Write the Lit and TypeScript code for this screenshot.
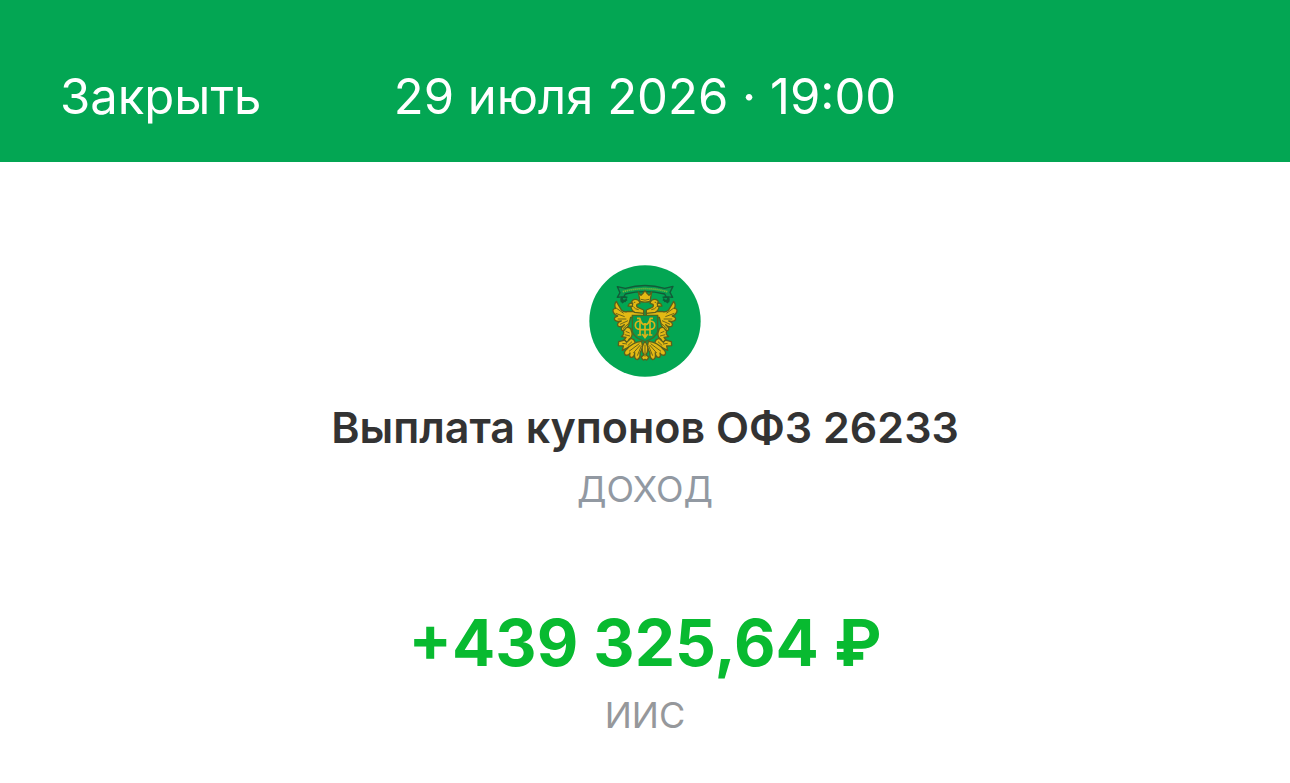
import { LitElement, css, html, svg } from "lit";
import { customElement, property } from "lit/decorators.js";

@customElement("issuer-emblem")
export class IssuerEmblem extends LitElement {
  // One side of the eagle, mirrored around x = 180 for the other side
  renderHalf() {
    return svg`
      <path class="gold" d="M176 153 L128 152 Q118 156 109 148 L94 122 Q86 132 92 143 Q81 144 85 155 Q88 163 98 166 Q84 170 90 179 Q97 185 109 181 Q92 188 100 197 Q109 201 118 192 Q103 204 112 210 Q124 208 131 193 L137 170 L176 165 Z"/>
      <path class="line" d="M92 141 L116 158 M92 158 L119 168 M98 175 L124 175 M105 191 L129 180 M114 204 L131 188"/>
      <path class="gold" d="M176 158 L149 155 Q136 148 138 132 Q139 116 151 116 Q162 116 165 128 L156 131 Q152 138 162 142 L176 148 Z"/>
      <path class="gold" d="M143 127 L133 129 L129 136 L142 137 Z"/>
      <path class="line" d="M147 125 h4 M145 138 Q150 146 161 147"/>
      <path class="gold" d="M119 207 Q126 195 137 204 L141 216 Q143 230 132 236 L129 247 L117 238 L123 230 L109 228 Q119 220 115 211 Z"/>
      <path class="line" d="M122 212 L134 217 M119 222 L135 226"/>
      <path class="gold" d="M101 243 L119 238 L125 245 L138 233 Q152 237 150 250 L130 260 L112 269 L115 256 L100 255 Z"/>
      <path class="line" d="M112 248 L126 250 M128 255 L141 243"/>
      <path class="gold" d="M170 242 Q143 244 125 266 Q114 275 121 283 Q130 286 135 277 Q131 292 142 290 Q150 286 149 276 Q146 295 157 297 Q167 292 165 277 L173 260 Z"/>
      <path class="line" d="M132 272 L163 249 M145 277 L166 253 M157 285 L169 256"/>
    `;
  }

  renderBranch() {
    return svg`
      <path class="branch" d="M127 111 Q104 103 110 124 M115 109 Q103 118 123 122 M126 116 L110 126"/>
    `;
  }

  render() {
    return html`
      <svg viewBox="12 13 336 336" role="img" aria-label="Министерство финансов">
        <circle class="disc" cx="180" cy="181" r="167" />
        ${this.renderBranch()}
        <g transform="translate(360 0) scale(-1 1)">${this.renderBranch()}</g>
        ${this.renderHalf()}
        <g transform="translate(360 0) scale(-1 1)">${this.renderHalf()}</g>
        <path class="ribbon" d="M97 78 L121 83 Q180 66 239 83 L264 77 L255 95 L263 110 L243 108 L239 100 Q180 86 121 100 L117 108 L97 110 L105 96 Z" />
        <path class="motto" d="M113 93 Q180 75 247 93" />
        <path class="gold" d="M160 94 L168 104 L174 98 L180 90 L186 98 L192 104 L200 94 L195 122 Q180 127 165 122 Z" />
        <path class="line" d="M168 116 Q180 121 192 116" />
        <path class="shield" d="M142 164 H218 V213 Q213 232 180 243 Q147 232 142 213 Z" />
        <path class="mono" d="M165 173 V223 M195 173 V223 M180 187 V231 M165 175 Q169 192 180 192 Q191 192 195 175 M164 181 Q151 182 151 194 Q151 206 164 206 M196 181 Q209 182 209 194 Q209 206 196 206 M165 207 H195 M158 223 H169 M191 223 H202 M156 173 H166 M194 173 H204 M172 220 L180 231 L188 220" />
        <path class="gold" d="M180 243 Q168 256 173 275 L177 282 L169 289 Q173 302 180 296 Q187 302 191 289 L183 282 L187 275 Q192 256 180 243 Z" />
        <path class="line" d="M180 252 V288" />
      </svg>
    `;
  }

  static styles = css`
    :host {
      display: block;
      width: 112px;
      height: 112px;
    }

    svg {
      display: block;
      width: 100%;
      height: 100%;
    }

    .disc {
      fill: #03a653;
    }

    .gold {
      fill: #e3b914;
      stroke: #5a601b;
      stroke-width: 4;
      stroke-linejoin: round;
    }

    .line {
      fill: none;
      stroke: #6b661a;
      stroke-width: 3;
    }

    .ribbon {
      fill: #079b50;
      stroke: #135a38;
      stroke-width: 4;
      stroke-linejoin: round;
    }

    .motto {
      fill: none;
      stroke: #78b839;
      stroke-width: 5;
      stroke-dasharray: 4 2;
    }

    .branch {
      fill: none;
      stroke: #0e6038;
      stroke-width: 6;
    }

    .shield {
      fill: #079c4d;
      stroke: #496b22;
      stroke-width: 4;
    }

    .mono {
      fill: none;
      stroke: #d8b41a;
      stroke-width: 5;
    }
  `;
}

@customElement("app-root")
export class AppRoot extends LitElement {
  @property() date = "29 июля 2026 · 19:00";
  @property() name = "Выплата купонов ОФЗ 26233";
  @property() category = "ДОХОД";
  @property() amount = "+439 325,64 ₽";
  @property() account = "ИИС";

  render() {
    return html`
      <header class="topbar">
        <button class="close" type="button">Закрыть</button>
        <time class="date" datetime="2026-07-29T19:00">${this.date}</time>
      </header>
      <main class="operation">
        <issuer-emblem></issuer-emblem>
        <h1 class="name">${this.name}</h1>
        <p class="caption category">${this.category}</p>
        <p class="amount">${this.amount}</p>
        <p class="caption account">${this.account}</p>
      </main>
    `;
  }

  static styles = css`
    :host {
      display: block;
      min-height: 100vh;
      background-color: #fff;
      font-family: Inter, "Noto Sans", sans-serif;
    }

    .topbar {
      display: grid;
      grid-template-columns: 1fr auto 1fr;
      align-items: center;
      padding: 65px 60px 33px;
      background-color: #03a653;
      color: #fff;
      font-size: 49px;
      font-weight: 400;
      line-height: 64px;
    }

    .close {
      justify-self: start;
      padding: 0;
      border: none;
      background: none;
      color: inherit;
      font: inherit;
      cursor: pointer;
    }

    .operation {
      display: flex;
      flex-direction: column;
      align-items: center;
      padding: 103px 32px 24px;
      text-align: center;
    }

    .name {
      margin: 24px 0 0;
      color: #333;
      font-size: 43px;
      font-weight: 600;
      line-height: 52px;
    }

    .caption {
      margin: 0;
      font-size: 36px;
      font-weight: 400;
      line-height: 48px;
    }

    .category {
      margin-top: 12px;
      color: #9299a2;
    }

    .amount {
      margin: 90px 0 0;
      color: #08ba30;
      font-size: 64px;
      font-weight: 700;
      line-height: 80px;
    }

    .account {
      margin-top: 8px;
      color: #96989b;
    }
  `;
}
